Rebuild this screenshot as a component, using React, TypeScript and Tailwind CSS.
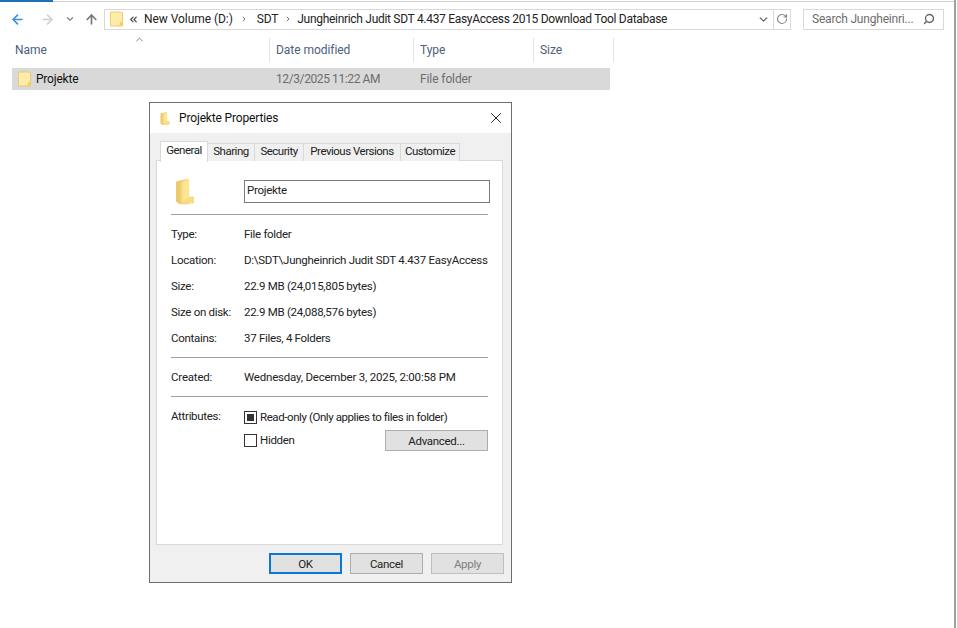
import { ArrowLeft, ArrowRight, ArrowUp, ChevronDown, ChevronRight, ChevronUp, ChevronsLeft, RotateCw, Search, X } from 'lucide-react';

const Folder = ({ className }: { className: string }) => (
  <svg viewBox="0 0 14 16" className={className}>
    <path d="M0.5 0.5h10.5l2.5 1v14h-13z" fill="#feeda8" stroke="#e9c766" strokeWidth="1" />
    <path d="M11 11l-1 4h3v-4z" fill="#f3d06a" />
  </svg>
);

const PropFolder = ({ className }: { className: string }) => (
  <svg viewBox="0 0 19 27" className={className}>
    <path d="M13 0 0 3v21l4 3h10z" fill="#ecca6d" />
    <path d="M5 4l9-4v19h5v7H5z" fill="#fde594" />
    <path d="M5 4l2-1v23H5z" fill="#f4d67f" />
    <path d="M14 19h5v7H5z" fill="#f8dc84" />
  </svg>
);

const Sep = () => <ChevronRight size={8} strokeWidth={3} className="text-[#777] mx-[7px] shrink-0" />;

const HeaderCell = ({ label, width }: { label: string; width: string }) => (
  <div className={`${width} h-[24px] flex items-center pl-[6px] border-r border-[#e5e5e5] tracking-[-0.05px] text-[#4c607a]`}>{label}</div>
);

const InfoRow = ({ label, value }: { label: string; value: string }) => (
  <div className="flex h-[26px] items-center pt-[2px]">
    <div className="w-[73px] shrink-0">{label}</div>
    <div className="whitespace-nowrap">{value}</div>
  </div>
);

const Tab = ({ label, width }: { label: string; width: string }) => (
  <div className={`${width} h-[18px] mt-[2px] pb-[2px] bg-[#f0f0f0] border border-b-0 border-l-0 border-[#d9d9d9] flex items-center justify-center tracking-[-0.5px]`}>{label}</div>
);

const DialogButton = ({ label, className }: { label: string; className: string }) => (
  <div className={`w-[73px] h-[21px] pt-[2px] flex items-center justify-center bg-[#e1e1e1] ${className}`}>{label}</div>
);

export default function App() {
  return (
    <div className="relative w-[957px] h-[628px] overflow-hidden bg-white text-[12px] tracking-[-0.2px] text-[#1a1a1a] font-['Roboto',sans-serif]">
      {/* explorer window */}
      <div className="h-[628px] border-r-2 border-[#a0a0a0] mr-[1px]">
        <div className="h-[2px] border-b border-[#d0d0d0]">
          <div className="w-[53px] h-[2px] bg-[#1f6fb5]" />
        </div>
        <div className="flex items-center h-[20px] mt-[7px] pl-[10px]">
          <ArrowLeft size={15} strokeWidth={2.6} className="text-[#3a8fdc]" />
          <ArrowRight size={15} strokeWidth={2.4} className="text-[#cfcfcf] ml-[15px]" />
          <ChevronDown size={10} strokeWidth={3} className="text-[#888] ml-[10px]" />
          <ArrowUp size={15} strokeWidth={2.6} className="text-[#777] ml-[9px]" />
          <div className="ml-[5px] w-[687px] h-[21px] border border-[#d9d9d9] flex items-center">
            <Folder className="w-[13px] h-[16px] ml-[5px]" />
            <ChevronsLeft size={11} strokeWidth={2.5} className="ml-[5px] text-[#444]" />
            <span className="ml-[5px] whitespace-nowrap tracking-[-0.05px] text-[#222]">New Volume (D:)</span>
            <Sep />
            <span className="ml-[2px] text-[#222]">SDT</span>
            <ChevronRight size={8} strokeWidth={3} className="text-[#777] ml-[6px] mr-[5px] shrink-0" />
            <span className="whitespace-nowrap tracking-[-0.3px] text-[#222]">Jungheinrich Judit SDT 4.437 EasyAccess 2015 Download Tool Database</span>
            <div className="ml-auto flex items-center h-full">
              <ChevronDown size={13} strokeWidth={2.5} className="text-[#666] mr-[3px]" />
              <div className="h-full w-[17px] border-l border-[#d9d9d9] flex items-center justify-center">
                <RotateCw size={12} strokeWidth={2.4} className="text-[#888]" />
              </div>
            </div>
          </div>
          <div className="ml-[12px] w-[141px] h-[21px] border border-[#d9d9d9] flex items-center pl-[8px] text-[#6d6d6d]">
            <span className="whitespace-nowrap">Search Jungheinri...</span>
            <Search size={12} strokeWidth={2.8} className="ml-auto mr-[8px] text-[#666] -scale-x-100" />
          </div>
        </div>
        <div className="relative flex h-[24px] mt-[9px] ml-[9px]">
          <ChevronUp size={11} className="absolute left-[125px] -top-[4px] text-[#777]" />
          <HeaderCell label="Name" width="w-[261px]" />
          <HeaderCell label="Date modified" width="w-[144px]" />
          <HeaderCell label="Type" width="w-[120px]" />
          <HeaderCell label="Size" width="w-[80px]" />
        </div>
        <div className="flex items-center w-[598px] h-[22px] mt-[6px] ml-[12px] bg-[#d9d9d9]">
          <Folder className="w-[13px] h-[16px] ml-[6px]" />
          <span className="ml-[5px] w-[240px] text-[#111]">Projekte</span>
          <span className="w-[144px] tracking-[-0.4px] text-[#6d6d6d]">12/3/2025 11:22 AM</span>
          <span className="tracking-[-0.1px] text-[#6d6d6d]">File folder</span>
        </div>
      </div>

      {/* properties dialog */}
      <div className="absolute left-[149px] top-[102px] w-[363px] h-[481px] border border-[#6e6e6e] bg-[#f0f0f0] flex flex-col text-[11.5px] tracking-[-0.3px] text-[#222]">
        <div className="h-[30px] bg-white flex items-center shrink-0">
          <PropFolder className="w-[10px] h-[13px] ml-[10px]" />
          <span className="ml-[9px] text-[12px] tracking-[-0.15px] text-[#111]">Projekte Properties</span>
          <X size={18} strokeWidth={1.2} className="ml-auto mr-[6px] text-[#111]" />
        </div>
        <div className="flex h-[20px] mt-[8px] ml-[10px] shrink-0 relative z-10">
          <div className="w-[48px] h-[21px] pb-[3px] bg-white border border-b-0 border-[#d9d9d9] flex items-center justify-center tracking-[-0.5px]">General</div>
          <Tab label="Sharing" width="w-[47px]" />
          <Tab label="Security" width="w-[49px]" />
          <Tab label="Previous Versions" width="w-[97px]" />
          <Tab label="Customize" width="w-[59px]" />
        </div>
        <div className="w-[347px] h-[385px] -mt-[1px] ml-[6px] bg-white border border-[#d9d9d9] px-[14px] shrink-0">
          <div className="flex items-start pt-[17px] h-[53px]">
            <PropFolder className="w-[18px] h-[27px] ml-[5px] shrink-0" />
            <div className="ml-[50px] mt-[2px] w-[246px] h-[23px] pb-[2px] shrink-0 border border-[#7a7a7a] flex items-center pl-[2px]">Projekte</div>
          </div>
          <div className="h-[1px] w-[317px] bg-[#a0a0a0]" />
          <div className="pt-[6px] pb-[6px] [&>div:nth-child(2)]:tracking-[-0.26px]">
            <InfoRow label="Type:" value="File folder" />
            <InfoRow label="Location:" value="D:\SDT\Jungheinrich Judit SDT 4.437 EasyAccess" />
            <InfoRow label="Size:" value="22.9 MB (24,015,805 bytes)" />
            <InfoRow label="Size on disk:" value="22.9 MB (24,088,576 bytes)" />
            <InfoRow label="Contains:" value="37 Files, 4 Folders" />
          </div>
          <div className="h-[1px] w-[317px] bg-[#a0a0a0]" />
          <div className="h-[38px] flex items-center tracking-[-0.2px]">
            <InfoRow label="Created:" value="Wednesday, December 3, 2025, 2:00:58 PM" />
          </div>
          <div className="h-[1px] w-[317px] bg-[#a0a0a0]" />
          <div className="flex mt-[10px]">
            <div className="w-[73px] pt-[1px]">Attributes:</div>
            <div className="w-[244px]">
              <div className="flex items-center h-[20px]">
                <div className="w-[13px] h-[13px] border border-[#333] flex items-center justify-center">
                  <div className="w-[7px] h-[7px] bg-[#333]" />
                </div>
                <span className="ml-[3px] pt-[1px] whitespace-nowrap tracking-[-0.42px]">Read-only (Only applies to files in folder)</span>
              </div>
              <div className="flex items-center h-[21px] mt-[3px]">
                <div className="w-[13px] h-[13px] border border-[#333]" />
                <span className="ml-[3px]">Hidden</span>
                <div className="ml-auto w-[103px] h-[21px] pt-[2px] bg-[#e1e1e1] border border-[#adadad] flex items-center justify-center">Advanced...</div>
              </div>
            </div>
          </div>
        </div>
        <div className="flex justify-end gap-[8px] mt-[8px] pr-[7px]">
          <DialogButton label="OK" className="border-2 border-[#0a78d4]" />
          <DialogButton label="Cancel" className="border border-[#adadad]" />
          <DialogButton label="Apply" className="bg-[#cccccc] border border-[#bfbfbf] text-[#808080]" />
        </div>
      </div>
    </div>
  );
}
